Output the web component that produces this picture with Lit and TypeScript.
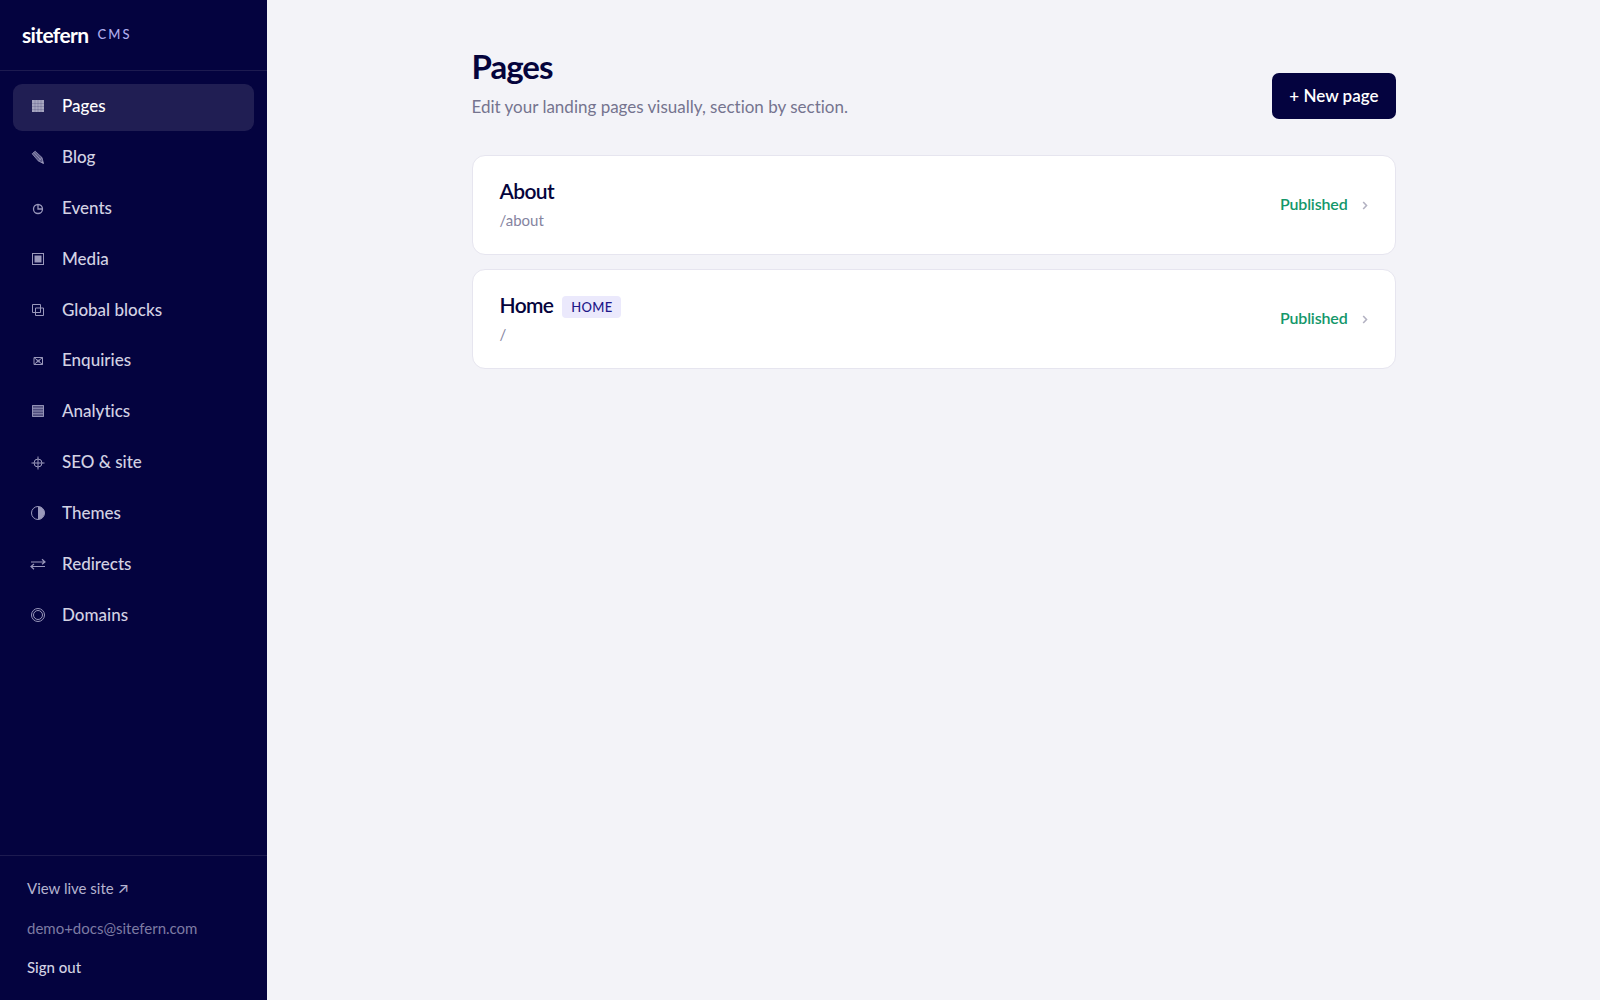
import { LitElement, html, svg, css, nothing } from "lit";
import { customElement, property } from "lit/decorators.js";
import { classMap } from "lit/directives/class-map.js";

const icons: Record<string, unknown> = {
  pages: svg`<rect x="2" y="2" width="12" height="12" fill="currentColor"/><path d="M2 5.5h12M2 8.5h12M2 11.5h12M5 2v12M8 2v12M11 2v12" stroke="#1f1d52" stroke-opacity=".28" stroke-width=".7"/>`,
  blog: svg`<path d="M2.200 4.800 5.200 2.200 12 8.600 13.500 14.500 8.400 12Z" fill="currentColor" fill-opacity=".6"/><path d="M3.800 3.400l7 7.600M2.200 4.800 5.200 2.200 12 8.600 13.500 14.500 8.400 12ZM8.400 12 12 8.600" fill="none" stroke="currentColor" stroke-width=".8"/><path d="M12.600 12l1.100 2.700-2.700-1.200z" fill="currentColor"/>`,
  events: svg`<circle cx="8" cy="9" r="4.500" fill="none" stroke="currentColor" stroke-width="1.300"/><path d="M8 4.500V9h4.500" fill="none" stroke="currentColor" stroke-width="1.300"/>`,
  media: svg`<rect x="2.500" y="2.500" width="11" height="11" fill="none" stroke="currentColor"/><rect x="4.500" y="4.500" width="7" height="7" fill="currentColor"/>`,
  blocks: svg`<path d="M2.500 2.500h8v8h-8zM5.500 6h8v7.500h-8z" fill="none" stroke="currentColor"/>`,
  enquiries: svg`<path d="M4 5.500h8.500v7H4zM4 5.500l8.500 7M12.500 5.500l-8.500 7" fill="none" stroke="currentColor"/><path d="M6.500 7.500h3.500v3h-3.500z" fill="currentColor" fill-opacity=".6"/>`,
  analytics: svg`<rect x="2" y="2" width="12" height="12" fill="currentColor" fill-opacity=".5"/><path d="M2.500 2.500h11v11h-11zM2.500 5.250h11M2.500 8h11M2.500 10.750h11" fill="none" stroke="currentColor" stroke-width=".9"/>`,
  seo: svg`<circle cx="8" cy="9" r="4" fill="none" stroke="currentColor"/><path d="M8 2.500v13M1.500 9h13" stroke="currentColor"/>`,
  themes: svg`<circle cx="8" cy="8" r="6.500" fill="none" stroke="currentColor"/><path d="M8 1.500a6.500 6.500 0 0 1 0 13z" fill="currentColor"/>`,
  redirects: svg`<path d="M1 6h14M12 3.200 15 6 12 8.300M15 10.500H1M4 8 1 10.500 4 13.200" fill="none" stroke="currentColor" stroke-width="1.200"/>`,
  domains: svg`<circle cx="8" cy="8" r="6.500" fill="none" stroke="currentColor"/><circle cx="8" cy="8" r="4.500" fill="none" stroke="currentColor"/>`,
};

const navItems = [
  ["pages", "Pages"],
  ["blog", "Blog"],
  ["events", "Events"],
  ["media", "Media"],
  ["blocks", "Global blocks"],
  ["enquiries", "Enquiries"],
  ["analytics", "Analytics"],
  ["seo", "SEO & site"],
  ["themes", "Themes"],
  ["redirects", "Redirects"],
  ["domains", "Domains"],
];

const sitePages = [
  { title: "About", path: "/about", home: false },
  { title: "Home", path: "/", home: true },
];

@customElement("cms-sidebar")
export class CmsSidebar extends LitElement {
  @property() current = "pages";

  static styles = css`
    :host {
      display: flex;
      flex-direction: column;
      box-sizing: border-box;
      background: #04033f;
      color: #d3d2e3;
    }
    .brand {
      display: flex;
      align-items: center;
      gap: 9px;
      padding: 21px 22px 22px;
      border-bottom: 1px solid #1d1b50;
      line-height: 27px;
    }
    .name {
      color: #fff;
      font-size: 21px;
      font-weight: 700;
      letter-spacing: -0.03em;
    }
    .tag {
      color: #b0acec;
      font-size: 13px;
      font-weight: 500;
      letter-spacing: 0.16em;
    }
    nav {
      flex: 1;
      padding: 13px 13px 0;
    }
    ul {
      display: flex;
      flex-direction: column;
      gap: 4px;
      height: 555px;
      margin: 0;
      padding: 0;
      list-style: none;
    }
    li {
      flex: 1;
      display: flex;
    }
    .item {
      flex: 1;
      display: flex;
      align-items: center;
      gap: 16px;
      padding: 0 17px 2px;
      border-radius: 9px;
      color: inherit;
      font-size: 17px;
      font-weight: 500;
      line-height: 24px;
      text-decoration: none;
    }
    .active {
      background: #201e53;
      color: #fff;
    }
    .icon {
      width: 16px;
      height: 16px;
      color: #9a98bb;
    }
    .active .icon {
      color: #a6a5bf;
    }
    footer {
      display: flex;
      flex-direction: column;
      align-items: flex-start;
      gap: 17px;
      padding: 21px 27px 22px;
      border-top: 1px solid #1d1b50;
      font-size: 15px;
      line-height: 22px;
    }
    .live {
      color: #b5b3cf;
      text-decoration: none;
    }
    .arrow {
      font-family: Inter, sans-serif;
    }
    .email {
      color: #7d7ba3;
    }
    .signout {
      padding: 0;
      border: 0;
      background: none;
      color: #d3d2e3;
      font: inherit;
      font-weight: 500;
      cursor: pointer;
    }
  `;

  render() {
    return html`
      <div class="brand"><span class="name">sitefern</span><span class="tag">CMS</span></div>
      <nav aria-label="Main">
        <ul>
          ${navItems.map(
            ([id, label]) => html`<li>
              <a
                class=${classMap({ item: true, active: id === this.current })}
                href="#${id}"
                aria-current=${id === this.current ? "page" : nothing}
                ><svg class="icon" viewBox="0 0 16 16" aria-hidden="true">${icons[id]}</svg
                ><span>${label}</span></a
              >
            </li>`
          )}
        </ul>
      </nav>
      <footer>
        <a class="live" href="#live">View live site <span class="arrow">↗</span></a>
        <span class="email">demo+docs@sitefern.com</span>
        <button class="signout" type="button">Sign out</button>
      </footer>
    `;
  }
}

@customElement("page-card")
export class PageCard extends LitElement {
  @property() name = "";
  @property() path = "";
  @property({ type: Boolean }) home = false;

  static styles = css`
    :host {
      display: block;
    }
    .card {
      display: flex;
      align-items: center;
      justify-content: space-between;
      padding: 22px 27px;
      border: 1px solid #e6e5ef;
      border-radius: 13px;
      background: #fff;
      color: #05043c;
      text-decoration: none;
    }
    .heading {
      display: flex;
      align-items: center;
      gap: 9px;
    }
    h2 {
      margin: 0;
      padding-bottom: 4px;
      font-size: 21px;
      font-weight: 600;
      line-height: 26px;
      letter-spacing: -0.03em;
    }
    .badge {
      padding: 0 9px;
      border-radius: 4px;
      background: #ebe9fc;
      color: #1d1789;
      font-size: 13px;
      font-weight: 500;
      line-height: 22px;
      letter-spacing: 0.02em;
    }
    .path {
      color: #85849f;
      font-size: 15px;
      line-height: 24px;
    }
    .state {
      display: flex;
      align-items: center;
      gap: 14px;
    }
    .status {
      padding-bottom: 2px;
      color: #13976a;
      font-size: 16px;
      font-weight: 600;
      line-height: 22px;
      letter-spacing: -0.01em;
    }
    .chevron {
      color: #b3b2c2;
      width: 6px;
      height: 10px;
    }
  `;

  render() {
    return html`<a class="card" href="#${this.path}">
      <div>
        <div class="heading">
          <h2>${this.name}</h2>
          ${this.home ? html`<span class="badge">HOME</span>` : nothing}
        </div>
        <div class="path">${this.path}</div>
      </div>
      <div class="state">
        <span class="status">Published</span>
        <svg class="chevron" viewBox="0 0 6 10" aria-hidden="true">
          <path d="M1.200 2 4.500 5.500 1.200 9" fill="none" stroke="currentColor" stroke-width="1.600" />
        </svg>
      </div>
    </a>`;
  }
}

@customElement("app-root")
export class AppRoot extends LitElement {
  static styles = css`
    :host {
      display: grid;
      grid-template-columns: 267px 1fr;
      min-height: 100vh;
      background: #f3f3f8;
      font-family: Lato, "Open Sans", sans-serif;
      font-variant-ligatures: none;
      color: #05043c;
    }
    main {
      box-sizing: border-box;
      width: 100%;
      max-width: 1014px;
      margin: 0 auto;
      padding: 45px;
    }
    header {
      display: flex;
      align-items: flex-end;
      justify-content: space-between;
      margin-bottom: 36px;
    }
    h1 {
      margin: 0 0 8px;
      font-size: 33px;
      font-weight: 700;
      line-height: 42px;
      letter-spacing: -0.03em;
    }
    .lead {
      margin: 0;
      color: #75748f;
      font-size: 17px;
      line-height: 24px;
    }
    .new {
      padding: 11px 17px;
      border: 0;
      border-radius: 7px;
      background: #04033f;
      color: #fff;
      font: inherit;
      font-size: 17px;
      font-weight: 600;
      line-height: 24px;
      cursor: pointer;
    }
    .list {
      display: flex;
      flex-direction: column;
      gap: 14px;
    }
  `;

  render() {
    return html`
      <cms-sidebar current="pages"></cms-sidebar>
      <main>
        <header>
          <div>
            <h1>Pages</h1>
            <p class="lead">Edit your landing pages visually, section by section.</p>
          </div>
          <button class="new" type="button">+ New page</button>
        </header>
        <div class="list">
          ${sitePages.map(
            (p) => html`<page-card .name=${p.title} .path=${p.path} .home=${p.home}></page-card>`
          )}
        </div>
      </main>
    `;
  }
}
